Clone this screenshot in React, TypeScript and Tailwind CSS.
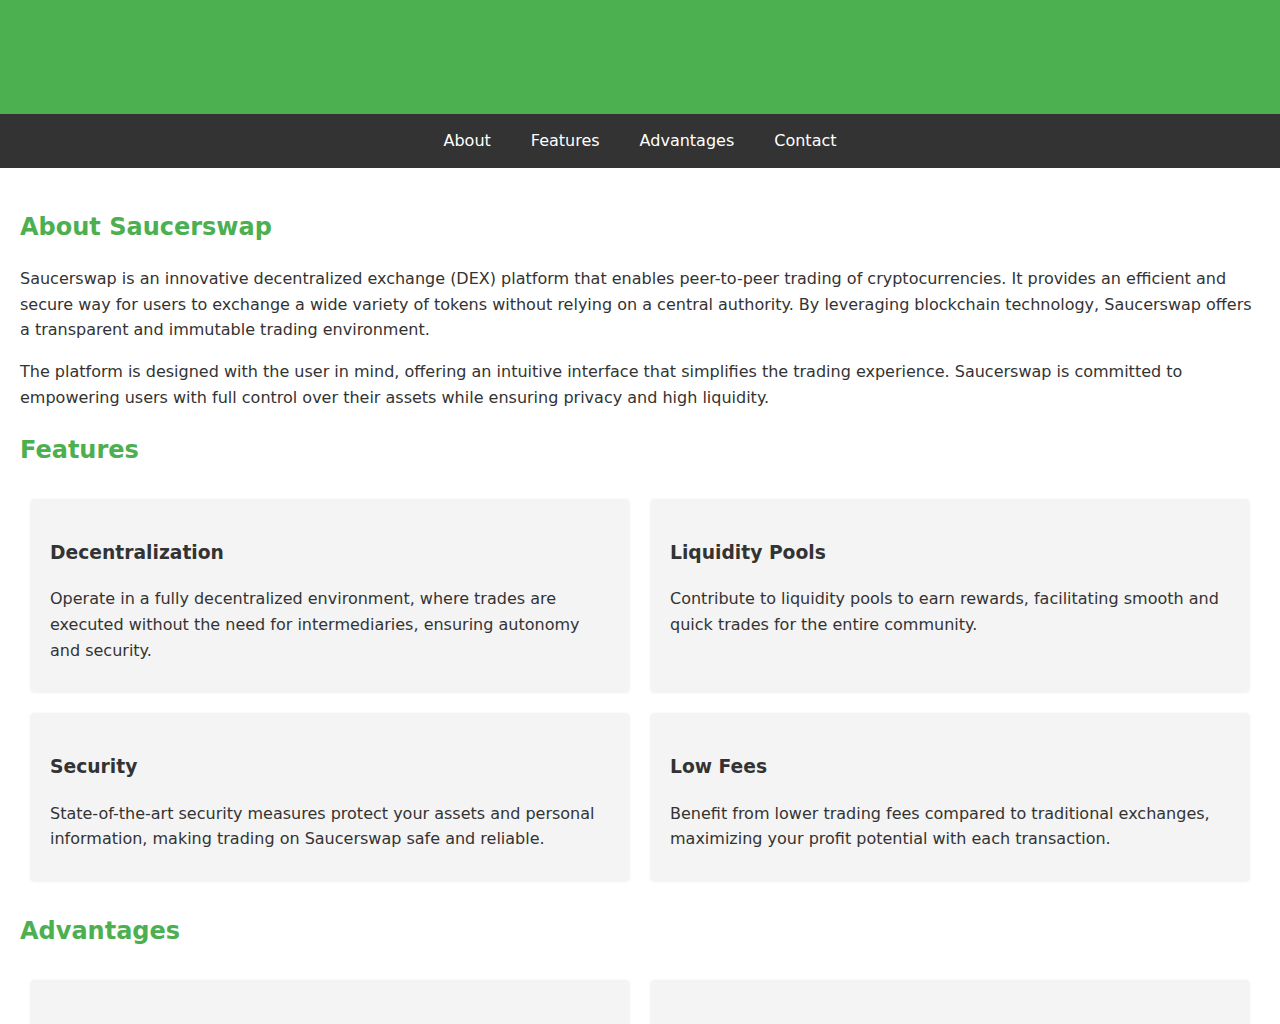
import React from 'react';

type Card = { title: string; text: string };

const features: Card[] = [
    {
        title: 'Decentralization',
        text: 'Operate in a fully decentralized environment, where trades are executed without the need for intermediaries, ensuring autonomy and security.',
    },
    {
        title: 'Liquidity Pools',
        text: 'Contribute to liquidity pools to earn rewards, facilitating smooth and quick trades for the entire community.',
    },
    {
        title: 'Security',
        text: 'State-of-the-art security measures protect your assets and personal information, making trading on Saucerswap safe and reliable.',
    },
    {
        title: 'Low Fees',
        text: 'Benefit from lower trading fees compared to traditional exchanges, maximizing your profit potential with each transaction.',
    },
];

const advantages: Card[] = [
    {
        title: 'User-Friendly Interface',
        text: 'An intuitive design makes it easy for beginners and experienced traders alike to swap tokens in just a few clicks.',
    },
    {
        title: 'High Liquidity',
        text: 'Deep liquidity pools keep slippage low and let you execute trades of any size with confidence.',
    },
    {
        title: 'Full Asset Control',
        text: 'Your keys, your crypto. Keep complete ownership of your funds at all times while you trade.',
    },
    {
        title: 'Transparency',
        text: 'Every transaction is recorded on the blockchain, providing a verifiable and immutable trading history.',
    },
];

const navLinks = ['About', 'Features', 'Advantages', 'Contact'];

const SectionTitle: React.FC<{ first?: boolean; children: React.ReactNode }> = ({ first, children }) => (
    <h2
        className={
            first
                ? 'text-[24px] font-bold text-[#4CAF50] my-[19.92px] leading-[1.6]'
                : 'text-[24px] font-bold text-[#4CAF50] mt-[20.5px] mb-[19.92px] leading-[1.6]'
        }
    >
        {children}
    </h2>
);

const CardGrid: React.FC<{ items: Card[] }> = ({ items }) => (
    <div className="flex flex-wrap">
        {items.map((item) => (
            <div
                key={item.title}
                className="w-[calc(50%-20px)] m-[10px] p-5 bg-[#f4f4f4] rounded-[5px] shadow-[0_0_3px_rgba(0,0,0,0.05)]"
            >
                <h3 className="text-[18.72px] font-bold my-[18.72px] leading-[1.6]">{item.title}</h3>
                <p className="my-[10px]">{item.text}</p>
            </div>
        ))}
    </div>
);

export default function App() {
    return (
        <div className="min-h-screen bg-white text-[#333] text-[16px] leading-[1.6] font-['DejaVu_Sans',sans-serif]">
            <header className="h-[114px] bg-[#4CAF50]" />
            <nav className="h-[54px] bg-[#333] flex items-center justify-center">
                {navLinks.map((link) => (
                    <a key={link} href={`#${link.toLowerCase()}`} className="mx-5 text-white">
                        {link}
                    </a>
                ))}
            </nav>
            <main className="p-5">
                <section id="about">
                    <SectionTitle first>About Saucerswap</SectionTitle>
                    <p className="my-4">
                        Saucerswap is an innovative decentralized exchange (DEX) platform that enables peer-to-peer trading of cryptocurrencies. It provides an efficient and secure way for users to exchange a wide variety of tokens without relying on a central authority. By leveraging blockchain technology, Saucerswap offers a transparent and immutable trading environment.
                    </p>
                    <p className="my-4">
                        The platform is designed with the user in mind, offering an intuitive interface that simplifies the trading experience. Saucerswap is committed to empowering users with full control over their assets while ensuring privacy and high liquidity.
                    </p>
                </section>
                <section id="features">
                    <SectionTitle>Features</SectionTitle>
                    <CardGrid items={features} />
                </section>
                <section id="advantages">
                    <SectionTitle>Advantages</SectionTitle>
                    <CardGrid items={advantages} />
                </section>
                <section id="contact">
                    <SectionTitle>Contact</SectionTitle>
                    <p className="my-4">
                        Have questions or feedback? Reach out to the Saucerswap team at support@saucerswap.io.
                    </p>
                </section>
            </main>
            <footer className="bg-[#333] text-white text-center py-4">
                &copy; 2024 Saucerswap. All rights reserved.
            </footer>
        </div>
    );
}
